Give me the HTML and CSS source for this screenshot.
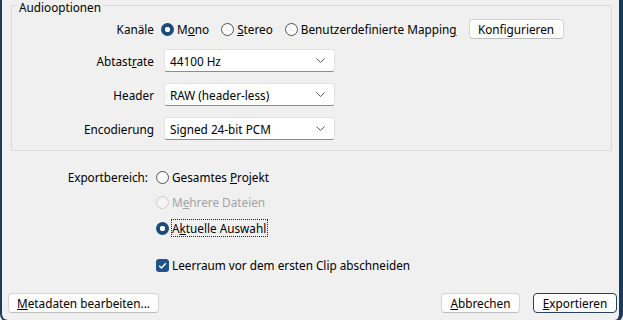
FILE: index.html
```html
<!DOCTYPE html>
<html lang="de">
<head>
  <meta charset="UTF-8">
  <title>Exportieren</title>
  <link rel="stylesheet" href="styles.css">
</head>
<body>
  <div class="fenster">
    <div class="gruppe">
      <span class="gruppe-titel">Audiooptionen</span>
      <div class="raster">
        <span class="beschriftung">Kanäle</span>
        <div class="auswahl-zeile">
          <label class="option"><span class="radio an"></span><span>M<u>o</u>no</span></label>
          <label class="option"><span class="radio"></span><span><u>S</u>tereo</span></label>
          <label class="option"><span class="radio"></span><span>Benutzerdefinierte Mappin<u>g</u></span></label>
          <button class="knopf konfig">Konfigurieren</button>
        </div>

        <span class="beschriftung">Abtast<u>r</u>ate</span>
        <div class="liste"><span>44100 Hz</span><svg width="9" height="5" viewBox="0 0 9 5"><path d="M0.5 0.5 L4.5 4.5 L8.5 0.5" fill="none" stroke="#555" stroke-width="1"/></svg></div>

        <span class="beschriftung">Header</span>
        <div class="liste"><span>RAW (header-less)</span><svg width="9" height="5" viewBox="0 0 9 5"><path d="M0.5 0.5 L4.5 4.5 L8.5 0.5" fill="none" stroke="#555" stroke-width="1"/></svg></div>

        <span class="beschriftung">Encodierung</span>
        <div class="liste"><span>Signed 24-bit PCM</span><svg width="9" height="5" viewBox="0 0 9 5"><path d="M0.5 0.5 L4.5 4.5 L8.5 0.5" fill="none" stroke="#555" stroke-width="1"/></svg></div>
      </div>
    </div>

    <div class="bereich">
      <div class="bereich-zeile">
        <span class="beschriftung">Exportbereich:</span>
        <label class="option"><span class="radio"></span><span>Gesamtes <u>P</u>rojekt</span></label>
      </div>
      <div class="bereich-zeile abstand-klein">
        <span class="beschriftung"></span>
        <label class="option aus"><span class="radio"></span><span>M<u>e</u>hrere Dateien</span></label>
      </div>
      <div class="bereich-zeile abstand-mittel">
        <span class="beschriftung"></span>
        <label class="option"><span class="radio an"></span><span class="fokus">A<u>k</u>tuelle Auswahl</span></label>
      </div>
      <div class="bereich-zeile abstand-gross">
        <span class="beschriftung"></span>
        <label class="option"><span class="haken"><svg width="13" height="13" viewBox="0 0 13 13"><path d="M3.2 6.8 L5.5 9 L9.8 4.2" fill="none" stroke="#fff" stroke-width="1.4"/></svg></span><span>Leerraum vor dem ersten Clip abschneiden</span></label>
      </div>
    </div>

    <div class="fuss">
      <button class="knopf meta"><u>M</u>etadaten bearbeiten...</button>
      <div class="fuss-rechts">
        <button class="knopf abbrechen"><u>A</u>bbrechen</button>
        <button class="knopf standard"><u>E</u>xportieren</button>
      </div>
    </div>
  </div>
</body>
</html>
```

FILE: styles.css
```css
body {
  margin: 0;
  background: #f0f0f0;
  font-family: "Noto Sans", "Open Sans", sans-serif;
  font-size: 11.75px;
  color: #000;
  overflow: hidden;
}

u {
  text-underline-offset: 1px;
}

.fenster {
  box-sizing: border-box;
  height: 322px;
  background: #f0f0f0;
  border-left: 2px solid #1b3a5c;
  border-right: 4px solid #1b3a5c;
  border-bottom: 2px solid #1b3a5c;
  border-bottom-left-radius: 8px;
  border-bottom-right-radius: 8px;
  padding-top: 5px;
}

.gruppe {
  position: relative;
  margin: 0 7px 0 9px;
  height: 146px;
  box-sizing: border-box;
  border: 1px solid #dadada;
  border-radius: 2px;
  padding: 14px 0 0 0;
}

.gruppe-titel {
  position: absolute;
  top: -7px;
  left: 5px;
  padding: 0 2px;
  background: #f0f0f0;
  line-height: 16px;
}

.raster {
  display: grid;
  grid-template-columns: 142px 1fr;
  column-gap: 7px;
  grid-template-rows: 18px 23px 23px 23px;
  row-gap: 11px;
  align-items: center;
}

.beschriftung {
  text-align: right;
  white-space: nowrap;
}

.auswahl-zeile {
  display: flex;
  align-items: center;
  height: 18px;
}

.auswahl-zeile .option {
  margin-right: 12px;
}

.option {
  display: flex;
  align-items: center;
  gap: 3px;
  margin-right: 13px;
  white-space: nowrap;
  line-height: 16px;
}

.radio {
  box-sizing: border-box;
  width: 13px;
  height: 13px;
  border-radius: 50%;
  border: 1px solid #555;
  background: #fafafa;
  flex: none;
}

.radio.an {
  border: none;
  background: radial-gradient(circle, #fff 0 2.4px, #1c4a7a 3px);
}

.option.aus {
  color: #a3a3a3;
}

.option.aus .radio {
  border-color: #cdcdcd;
  background: #f4f4f4;
}

.fokus {
  outline: 1px dotted #222;
  padding: 0 1px 0 0;
}

.liste {
  box-sizing: border-box;
  margin-left: 3px;
  width: 171px;
  height: 23px;
  display: flex;
  align-items: center;
  justify-content: space-between;
  padding: 0 9px 0 5px;
  background: #fff;
  border: 1px solid #e3e3e3;
  border-bottom: 1px solid #8c8c8c;
  border-radius: 3px;
}

.knopf {
  box-sizing: border-box;
  font: inherit;
  color: #000;
  height: 20px;
  padding: 0;
  background: #fdfdfd;
  border: 1px solid #d4d4d4;
  border-bottom-color: #bdbdbd;
  border-radius: 4px;
  line-height: 16px;
  flex: none;
}

.konfig {
  width: 95px;
}

.bereich {
  display: flex;
  flex-direction: column;
  margin-top: 16px;
}

.bereich-zeile {
  display: flex;
  align-items: center;
  gap: 8px;
  height: 20px;
}

.bereich-zeile .beschriftung {
  width: 146px;
  flex: none;
}

.abstand-klein {
  margin-top: 5px;
}

.abstand-mittel {
  margin-top: 6px;
}

.abstand-gross {
  margin-top: 17px;
}

.haken {
  width: 13px;
  height: 13px;
  border-radius: 3px;
  background: #1f5389;
  flex: none;
}

.haken svg {
  display: block;
}

.fuss {
  display: flex;
  justify-content: space-between;
  margin-top: 18px;
  padding: 0 2px 0 6px;
}

.fuss-rechts {
  display: flex;
  gap: 13px;
}

.meta {
  width: 151px;
}

.abbrechen {
  width: 79px;
}

.standard {
  width: 84px;
  border: 1px solid #26405e;
}
```
